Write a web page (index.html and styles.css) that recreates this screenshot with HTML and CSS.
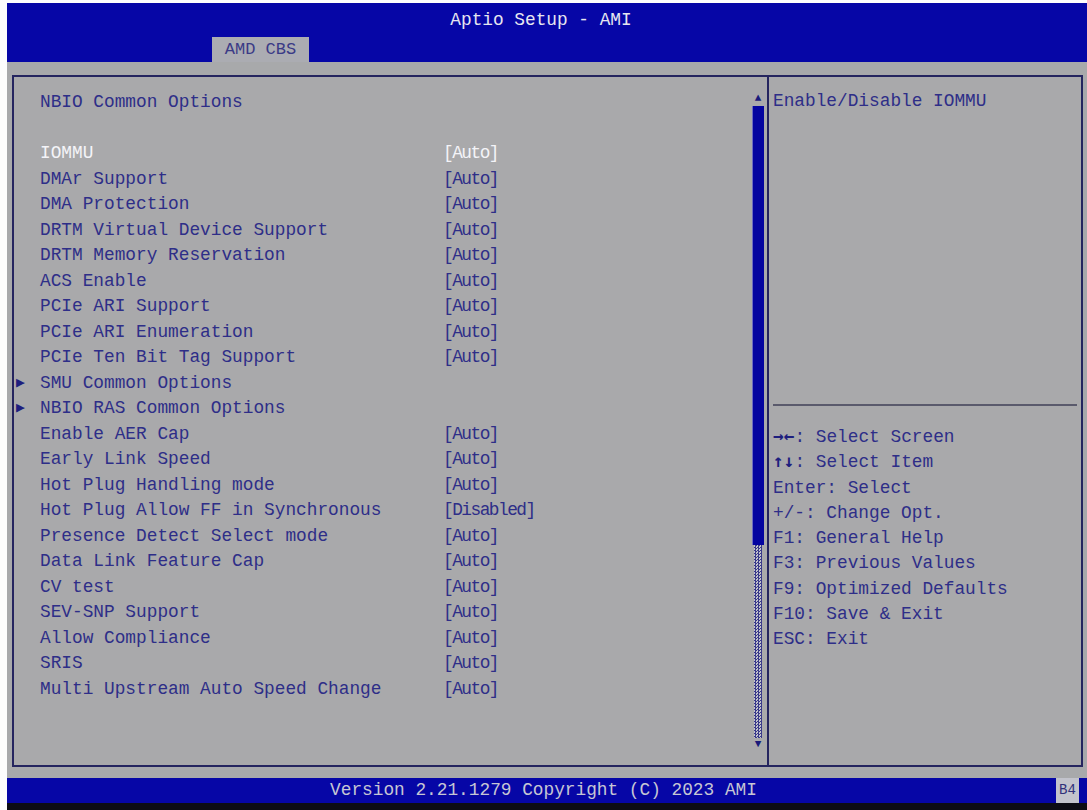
FILE: index.html
```html
<!DOCTYPE html>
<html lang="en">
<head>
    <meta charset="UTF-8">
    <title>Aptio Setup - AMI</title>
    <link rel="stylesheet" href="styles.css">
</head>
<body>
    <div class="screen">
        <!-- Header with title and tab -->
        <div class="header">
            <div class="title">Aptio Setup - AMI</div>
            <div class="tabs">
                <div class="tab">AMD CBS</div>
            </div>
        </div>

        <div class="workspace">
            <div class="frame">
                <div class="main">
                    <div class="options">
                        <div class="row"><span></span><span class="heading">NBIO Common Options</span><span></span></div>
                        <div class="row"><span></span><span></span><span></span></div>
                        <div class="row selected"><span></span><span>IOMMU</span><span class="value">[Auto]</span></div>
                        <div class="row"><span></span><span>DMAr Support</span><span class="value">[Auto]</span></div>
                        <div class="row"><span></span><span>DMA Protection</span><span class="value">[Auto]</span></div>
                        <div class="row"><span></span><span>DRTM Virtual Device Support</span><span class="value">[Auto]</span></div>
                        <div class="row"><span></span><span>DRTM Memory Reservation</span><span class="value">[Auto]</span></div>
                        <div class="row"><span></span><span>ACS Enable</span><span class="value">[Auto]</span></div>
                        <div class="row"><span></span><span>PCIe ARI Support</span><span class="value">[Auto]</span></div>
                        <div class="row"><span></span><span>PCIe ARI Enumeration</span><span class="value">[Auto]</span></div>
                        <div class="row"><span></span><span>PCIe Ten Bit Tag Support</span><span class="value">[Auto]</span></div>
                        <div class="row"><span class="submenu">&#9654;</span><span>SMU Common Options</span><span></span></div>
                        <div class="row"><span class="submenu">&#9654;</span><span>NBIO RAS Common Options</span><span></span></div>
                        <div class="row"><span></span><span>Enable AER Cap</span><span class="value">[Auto]</span></div>
                        <div class="row"><span></span><span>Early Link Speed</span><span class="value">[Auto]</span></div>
                        <div class="row"><span></span><span>Hot Plug Handling mode</span><span class="value">[Auto]</span></div>
                        <div class="row"><span></span><span>Hot Plug Allow FF in Synchronous</span><span class="value">[Disabled]</span></div>
                        <div class="row"><span></span><span>Presence Detect Select mode</span><span class="value">[Auto]</span></div>
                        <div class="row"><span></span><span>Data Link Feature Cap</span><span class="value">[Auto]</span></div>
                        <div class="row"><span></span><span>CV test</span><span class="value">[Auto]</span></div>
                        <div class="row"><span></span><span>SEV-SNP Support</span><span class="value">[Auto]</span></div>
                        <div class="row"><span></span><span>Allow Compliance</span><span class="value">[Auto]</span></div>
                        <div class="row"><span></span><span>SRIS</span><span class="value">[Auto]</span></div>
                        <div class="row"><span></span><span>Multi Upstream Auto Speed Change</span><span class="value">[Auto]</span></div>
                    </div>

                    <!-- Scrollbar -->
                    <div class="scrollbar">
                        <div class="arrow">&#9650;</div>
                        <div class="thumb"></div>
                        <div class="track"></div>
                        <div class="arrow">&#9660;</div>
                    </div>
                </div>

                <div class="help">
                    <div class="help-text">Enable/Disable IOMMU</div>
                    <div class="keys">
                        <div><b>&rarr;&larr;</b>: Select Screen</div>
                        <div><b>&uarr;&darr;</b>: Select Item</div>
                        <div>Enter: Select</div>
                        <div>+/-: Change Opt.</div>
                        <div>F1: General Help</div>
                        <div>F3: Previous Values</div>
                        <div>F9: Optimized Defaults</div>
                        <div>F10: Save &amp; Exit</div>
                        <div>ESC: Exit</div>
                    </div>
                </div>
            </div>
        </div>

        <div class="footer">
            <div class="version">Version 2.21.1279 Copyright (C) 2023 AMI</div>
            <div class="post-code">B4</div>
        </div>
    </div>
</body>
</html>
```

FILE: styles.css
```css
* {
    margin: 0;
    padding: 0;
    box-sizing: border-box;
}

body {
    background: #fdfdfd;
    width: 1087px;
    height: 810px;
    overflow: hidden;
    font-family: 'Liberation Mono', 'DejaVu Sans Mono', monospace;
    font-size: 17.8px;
    color: #2e2e88;
}

.screen {
    width: 1080px;
    margin: 3px 0 0 7px;
    border-bottom: 7px solid #0c0c14;
}

.header {
    background: #0606a6;
    height: 59px;
    display: flex;
    flex-direction: column;
}

.title {
    height: 34px;
    line-height: 34px;
    text-align: center;
    color: #e6e6f0;
    padding-right: 12px;
}

.tabs {
    height: 25px;
    display: flex;
    padding-left: 205px;
}

.tab {
    background: #abacb2;
    color: #3a3a86;
    width: 97px;
    line-height: 25px;
    text-align: center;
    font-size: 17px;
}

.workspace {
    background: #a8a9ab;
    padding: 13px 4px 11px 5px;
}

.frame {
    height: 692px;
    border: 2px solid #25255f;
    background: #a9a9ab;
    display: flex;
}

.main {
    width: 753px;
    display: flex;
}

.options {
    flex: 1;
    padding-top: 13px;
}

.row {
    display: grid;
    grid-template-columns: 26px 403px 1fr;
    height: 25.5px;
    line-height: 25.5px;
    white-space: nowrap;
}

.row .value {
    letter-spacing: -1.5px;
}

.row.selected {
    color: #f4f4f8;
}

.submenu {
    font-size: 15px;
    padding-left: 2px;
    color: #1e1e7e;
}

.scrollbar {
    width: 12px;
    margin-right: 3px;
    padding-top: 15px;
    display: flex;
    flex-direction: column;
}

.arrow {
    height: 12px;
    line-height: 12px;
    font-size: 11px;
    text-align: center;
    color: #1a1a7a;
}

.thumb {
    height: 439px;
    margin-top: 2px;
    background: #0404a0;
    border-left: 1px solid #6c6cc0;
}

.track {
    height: 193px;
    margin: 0 2px;
    background: repeating-conic-gradient(#3a3a8a 0 25%, #c4c4cc 0 50%) 0 0 / 3px 3px;
}

.help {
    flex: 1;
    border-left: 2px solid #25255f;
    padding-left: 4px;
}

.help-text {
    height: 329px;
    padding-top: 11.5px;
    line-height: 25px;
    border-bottom: 2px solid #5a5a6c;
    margin-right: 4px;
}

.keys {
    padding-top: 19px;
}

.keys div {
    height: 25.3px;
    line-height: 25.3px;
}

.keys b {
    font-family: 'DejaVu Sans Mono', monospace;
    line-height: 1;
    color: #1e1e7e;
}

.footer {
    background: #0606a6;
    height: 25px;
    display: flex;
    align-items: stretch;
}

.version {
    flex: 1;
    text-align: center;
    line-height: 25px;
    color: #c6c6d4;
    padding-left: 24px;
}

.post-code {
    width: 23px;
    margin-right: 8px;
    background: #c2c3cc;
    color: #30307a;
    font-size: 14px;
    line-height: 25px;
    text-align: center;
}
```
